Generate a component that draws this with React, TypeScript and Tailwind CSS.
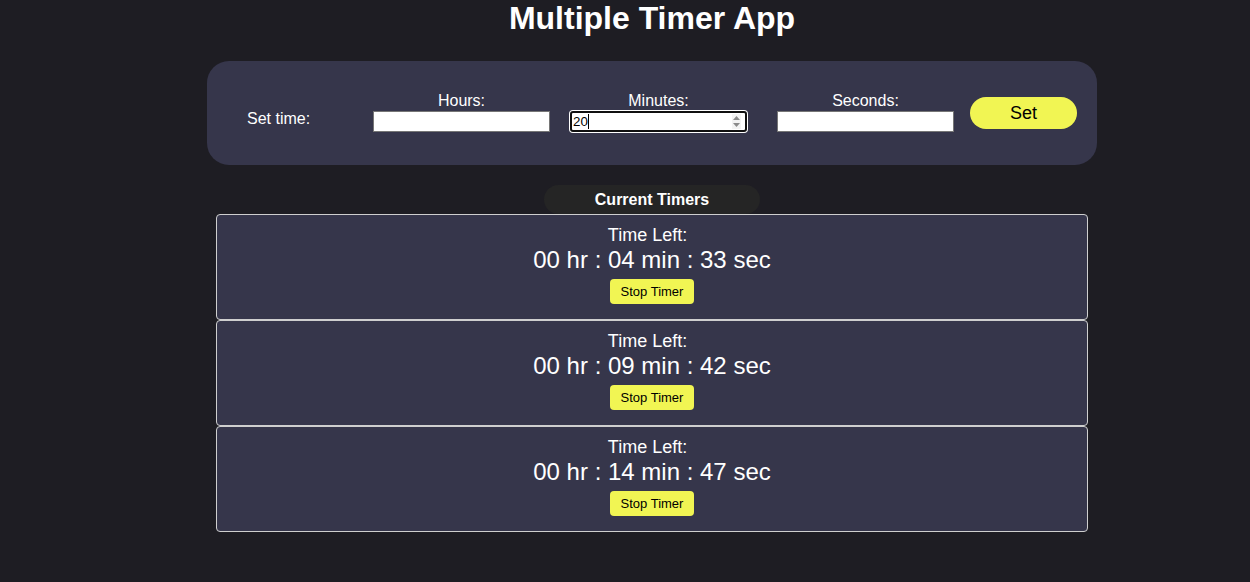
const timers = [
  { h: "00", m: "04", s: "33" },
  { h: "00", m: "09", s: "42" },
  { h: "00", m: "14", s: "47" },
];

const inputBase =
  "block h-[21px] w-[177px] bg-white text-black text-[13.33px] outline-none";

const TimeField = ({ label, value, focused }: { label: string; value?: string; focused?: boolean }) => (
  <div className="flex w-[177px] flex-col items-center">
    <label className="text-[16px] leading-[18.5px]">{label}</label>
    {focused ? (
      <div className="relative">
        <input
          className={`${inputBase} rounded-[3px] border-2 border-[#101010] pl-[1px] shadow-[0_0_0_1px_#ffffff]`}
          type="text"
          readOnly
          value={value}
        />
        {/* caret */}
        <span className="absolute left-[18px] top-[3px] h-[15px] w-px bg-black" />
        {/* spinner */}
        <svg className="absolute right-[6px] top-[3px]" width="9" height="15" viewBox="0 0 9 15">
          <rect x="0" y="0" width="9" height="15" fill="#f3f3f3" />
          <path d="M1 6 L4.5 2 L8 6 Z" fill="#8a8a8a" />
          <path d="M1 9 L4.5 13 L8 9 Z" fill="#8a8a8a" />
        </svg>
      </div>
    ) : (
      <input className={`${inputBase} border border-[#767676] px-[2px]`} type="text" readOnly />
    )}
  </div>
);

const TimerCard = ({ h, m, s }: { h: string; m: string; s: string }) => (
  <div className="flex h-[106px] flex-col items-center rounded-[4px] border border-[#cfcfcf] bg-[#36364b] pt-[10px]">
    <p className="pr-[9px] text-[18px] leading-[21px]">Time Left:</p>
    <p className="text-[24px] leading-[28px]">
      {h} hr : {m} min : {s} sec
    </p>
    <button className="mt-[5px] h-[25px] w-[84px] rounded-[4px] bg-[#f1f553] text-[13px] text-black">
      Stop Timer
    </button>
  </div>
);

export default function App() {
  return (
    <div className="min-h-screen bg-[#1e1d23] pl-[54px] font-['Liberation_Sans',Arial,sans-serif] text-white">
      <h1 className="text-center text-[32px] font-bold leading-[37px]">Multiple Timer App</h1>

      {/* form panel */}
      <div className="mx-auto mt-[24px] flex h-[104px] w-[890px] items-start rounded-[22px] bg-[#36364b] pl-[40px] pt-[31px]">
        <span className="mt-[18px] w-[126px] text-[16px] leading-[18.5px]">Set time:</span>
        <TimeField label="Hours:" />
        <div className="ml-[20px]">
          <TimeField label="Minutes:" value="20" focused />
        </div>
        <div className="ml-[30px]">
          <TimeField label="Seconds:" />
        </div>
        <button className="ml-[16px] mt-[5px] h-[32px] w-[107px] rounded-full bg-[#f1f553] text-[18px] text-black">
          Set
        </button>
      </div>

      {/* timers */}
      <div className="mx-auto mt-[20px] flex h-[29px] w-[216px] items-center justify-center rounded-full bg-[#252525] text-[16px] font-bold">
        Current Timers
      </div>
      <div className="mx-auto flex w-[872px] flex-col">
        {timers.map((t, i) => (
          <TimerCard key={i} {...t} />
        ))}
      </div>
    </div>
  );
}
